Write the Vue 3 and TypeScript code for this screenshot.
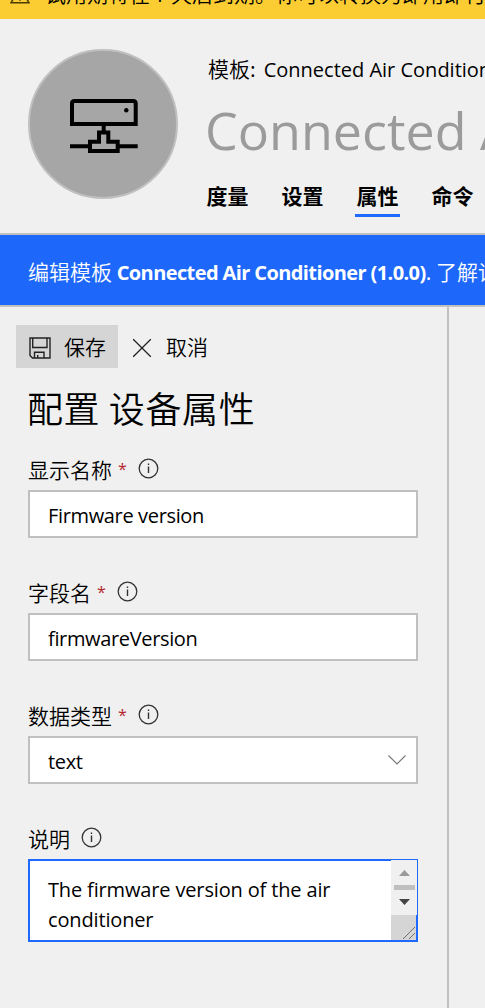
<script setup lang="ts">
interface Field {
  label: string
  value: string
  required: boolean
  kind: 'input' | 'select' | 'textarea'
  tone: string
}

const tabs: string[] = ['度量', '设置', '属性', '命令']
const activeTab = '属性'

const fields: Field[] = [
  { label: '显示名称', value: 'Firmware version', required: true, kind: 'input', tone: 'name' },
  { label: '字段名', value: 'firmwareVersion', required: true, kind: 'input', tone: 'key' },
  { label: '数据类型', value: 'text', required: true, kind: 'select', tone: 'type' },
  { label: '说明', value: 'The firmware version of the air conditioner', required: false, kind: 'textarea', tone: 'desc' },
]
</script>

<template>
  <div class="page">
    <div class="trial">
      <svg class="warn" width="20" height="18" viewBox="0 0 20 18">
        <path d="M10 1.2 19 16.8H1Z M10 6v6 M10 13.2v1.6" fill="none" stroke="#4a3b05" stroke-width="1.5" />
      </svg>
      <span>试用期将在 7 天后到期。你可以转换为即用即付</span>
    </div>

    <header class="header">
      <div class="avatar">
        <svg width="70" height="56" viewBox="69 98 70 56" fill="none" stroke="#000" stroke-width="4">
          <path d="M72 124V103.5Q72 101 74.500 101H133.200Q135.700 101 135.700 103.500V124Z" />
          <path d="M103.700 125V131 M70 146.200H89 M119 146.200H137.700" />
          <path d="M99 132.500H108.300V141.700H117.700V151H90V141.700H99Z" />
          <circle cx="126.300" cy="110.200" r="2.200" fill="#000" stroke="none" />
        </svg>
      </div>
      <div class="heading">
        <div class="template">模板:<span class="latin template-name">Connected Air Conditioner (1.0.0)</span></div>
        <div class="title">Connected Air Conditioner</div>
        <nav class="tabs">
          <span v-for="tab in tabs" :key="tab" class="tab" :class="{ active: tab === activeTab }">{{ tab }}</span>
        </nav>
      </div>
    </header>

    <div class="notice">编辑模板 <b class="latin notice-name">Connected Air Conditioner (1.0.0)</b>. 了解详细信息</div>

    <div class="body">
      <section class="panel">
        <div class="toolbar">
          <button class="btn save">
            <svg class="disk" width="22" height="22" viewBox="0 0 22 22" fill="none" stroke="#222" stroke-width="1.400">
              <path d="M1 1H21V21H3.500L1 18.500Z M3.700 1V10.500H18V1 M5.500 21V15.200H15V21 M8.700 21V18" />
            </svg>
            <span>保存</span>
          </button>
          <button class="btn cancel">
            <svg class="cross" width="20" height="20" viewBox="0 0 20 20" fill="none" stroke="#222" stroke-width="1.300">
              <path d="M1.200 1.200 18.800 18.800M18.800 1.200 1.200 18.800" />
            </svg>
            <span>取消</span>
          </button>
        </div>
        <h2 class="form-title">配置 设备属性</h2>

        <div v-for="field in fields" :key="field.label" class="field">
          <div class="label">
            <span>{{ field.label }}</span>
            <span v-if="field.required" class="star">*</span>
            <svg class="info" width="21" height="21" viewBox="0 0 21 21">
              <circle cx="10.500" cy="10.500" r="9.300" fill="none" stroke="#333" stroke-width="1.300" />
              <path d="M10.500 8.500V15M10.500 5.500V7" stroke="#333" stroke-width="1.400" />
            </svg>
          </div>
          <div class="box" :class="field.kind">
            <span class="latin value" :class="field.tone">{{ field.value }}</span>
            <svg v-if="field.kind === 'select'" class="chevron" width="20" height="12" viewBox="0 0 20 12">
              <path d="M1.500 1.500 10 10 18.500 1.500" fill="none" stroke="#777" stroke-width="1.100" />
            </svg>
            <svg v-if="field.kind === 'textarea'" class="scroll" width="27" height="82" viewBox="0 0 27 82">
              <path d="M0 1H26V56H0Z" fill="#f0f0f0" />
              <path d="M0 56H25V81H0Z" fill="#d5d5d5" />
              <path d="M8 17 13.500 11 19 17Z" fill="#999" />
              <path d="M3 26H24V31H3Z" fill="#bfbfbf" />
              <path d="M8 40 13.500 46 19 40Z" fill="#444" />
              <path d="M12 80 24 68M18 80 24 74" stroke="#555" stroke-width="0.800" />
            </svg>
          </div>
        </div>
      </section>
    </div>
  </div>
</template>

<style>
html,
body {
  background: #f0f0f0;
  overflow: hidden;
}
</style>

<style scoped>
.page {
  width: 485px;
  height: 1008px;
  overflow: hidden;
  background: #f0f0f0;
  color: #000;
  font: 350 21px/30px "Noto Sans CJK SC", sans-serif;
  white-space: nowrap;
  box-sizing: border-box;
}
.page * {
  box-sizing: border-box;
}
.latin {
  font-family: "Open Sans", sans-serif;
  font-size: 20px;
  font-weight: 400;
}
.trial {
  height: 19px;
  background: #fccd33;
  overflow: hidden;
  display: flex;
  align-items: flex-end;
  gap: 15px;
  padding: 0 0 11px 10px;
}
.trial span {
  height: 30px;
}
.warn {
  flex: none;
  margin-bottom: 4px;
}
.header {
  height: 216px;
  border-bottom: 2px solid #c0c0c0;
  padding: 30px 0 0 28px;
  display: flex;
  gap: 28px;
}
.avatar {
  flex: none;
  width: 150px;
  height: 150px;
  border: 2px solid #c0c0c0;
  border-radius: 50%;
  background: #a6a6a6;
  display: flex;
  align-items: center;
  justify-content: center;
  padding: 4px 0 0 2px;
}
.heading {
  display: flex;
  flex-direction: column;
}
.template {
  padding-left: 2px;
  margin-top: 4px;
  height: 30px;
}
.template-name {
  margin-left: 8px;
}
.title {
  font: 400 52px/70px "Open Sans", sans-serif;
  color: #9b9b9b;
  height: 70px;
  margin: 12px 0 0 -1px;
}
.tabs {
  display: flex;
  gap: 30px;
  margin: 15px 0 0 -1px;
}
.tab {
  font-weight: 700;
  width: 45px;
  height: 37px;
  padding-left: 1.5px;
  border-bottom: 3px solid transparent;
}
.tab.active {
  border-color: #1f69ff;
}
.notice {
  height: 72px;
  background: #1d68fb;
  border-bottom: 2px solid #c0c0c0;
  color: #fff;
  padding: 21px 0 0 28px;
  overflow: hidden;
}
.notice-name {
  font-weight: 700;
  letter-spacing: -0.6px;
}
.body {
  height: 701px;
}
.panel {
  width: 449px;
  height: 100%;
  border-right: 2px solid #c0c0c0;
  padding: 18px 29px 0 28px;
}
.toolbar {
  display: flex;
  margin-left: -12px;
}
.btn {
  border: 0;
  background: none;
  font: inherit;
  color: #000;
  height: 43px;
  display: flex;
  align-items: center;
  padding: 0;
}
.btn span {
  margin-top: -2px;
}
.disk,
.cross {
  margin-top: 2px;
}
.save {
  width: 102px;
  background: #d5d5d5;
  padding-left: 13px;
  gap: 13px;
}
.cancel {
  padding-left: 14px;
  gap: 14px;
}
.form-title {
  margin: 14px 0 22px -1px;
  font-size: 36px;
  line-height: 50px;
  font-weight: 350;
  letter-spacing: 0.6px;
}
.field {
  margin-bottom: 39px;
}
.label {
  display: flex;
  height: 36px;
  line-height: 30px;
}
.star {
  color: #b5262e;
  font-family: "Open Sans", sans-serif;
  font-weight: 400;
  font-size: 16px;
  margin-left: 6px;
  width: 9px;
}
.info {
  margin: 4px 0 0 11px;
}
.box {
  height: 48px;
  border: 2px solid #c0c0c0;
  background: #fff;
  padding: 9px 9px 0 18px;
  display: flex;
  justify-content: space-between;
}
.name,
.key,
.type {
  letter-spacing: -0.35px;
}
.desc {
  letter-spacing: -0.15px;
}
.chevron {
  margin-top: 7px;
}
.textarea {
  height: 83px;
  border-color: #1f69ff;
  padding: 14px 0 0 18px;
}
.textarea .value {
  width: 300px;
  white-space: normal;
}
.scroll {
  flex: none;
  margin: -16px -2px 0 0;
}
</style>
